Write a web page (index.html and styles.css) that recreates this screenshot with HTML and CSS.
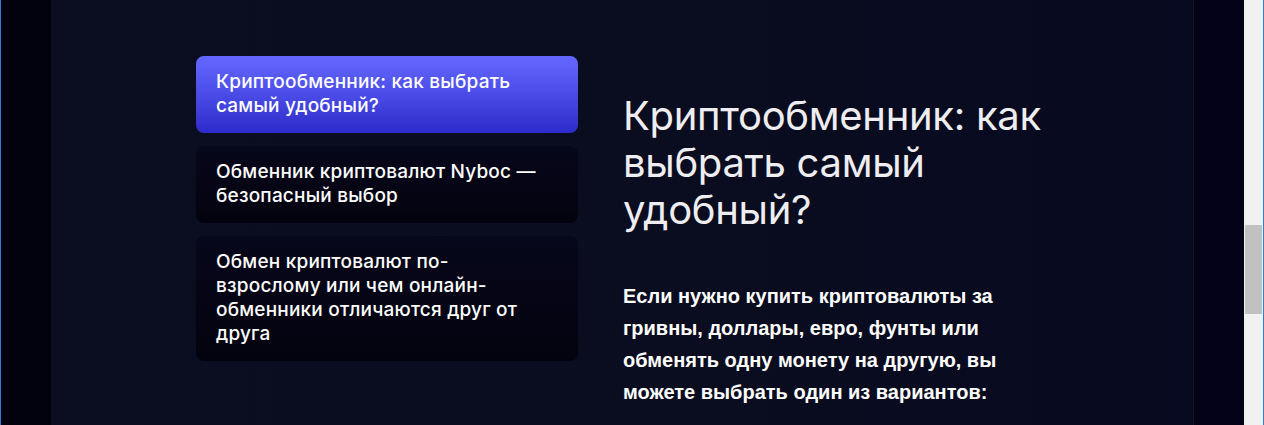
FILE: index.html
```html
<!DOCTYPE html>
<html lang="ru">
<head>
<meta charset="utf-8">
<title>Криптообменник</title>
<link rel="stylesheet" href="styles.css">
</head>
<body>
<div class="window">
  <div class="viewport">
    <div class="gutter"></div>
    <section class="panel">
      <nav class="toc">
        <a class="toc-item active">Криптообменник: как выбрать самый удобный?</a>
        <a class="toc-item">Обменник криптовалют Nyboc — безопасный выбор</a>
        <a class="toc-item">Обмен криптовалют по-взрослому или чем онлайн-обменники отличаются друг от друга</a>
      </nav>
      <article class="content">
        <h1 class="title">Криптообменник: как выбрать самый удобный?</h1>
        <p class="lead">Если нужно купить криптовалюты за гривны, доллары, евро, фунты или обменять одну монету на другую, вы можете выбрать один из вариантов:</p>
      </article>
    </section>
    <div class="gutter right"></div>
  </div>
  <div class="scrollbar"><div class="thumb"></div></div>
</div>
</body>
</html>
```

FILE: styles.css
```css
* { box-sizing: border-box; }
html, body { margin: 0; padding: 0; height: 425px; overflow: hidden; }
body { background: #02010f; font-family: Inter, "Noto Sans", sans-serif; }

.window {
  display: flex;
  height: 425px;
  border-left: 1px solid #2d7fd6;
  border-right: 1px solid #2d7fd6;
}
.viewport {
  flex: 1;
  display: flex;
  background: #02010f;
}
.gutter { width: 50px; flex: none; background: #02010e; }
.gutter.right { width: 50px; background: #030218; }

.panel {
  flex: 1;
  display: flex;
  gap: 45px;
  padding: 56px 0 0 145px;
  background: linear-gradient(90deg, #0b0d20 0%, #0a0c1f 60%, #070a20 100%);
  border-right: 1px solid #17181c;
}

.toc {
  width: 382px;
  flex: none;
  display: flex;
  flex-direction: column;
  gap: 13px;
}
.toc-item {
  display: block;
  padding: 14px 30px 15px 20px;
  border-radius: 8px;
  color: #ffffff;
  font-size: 19px;
  font-weight: 500;
  line-height: 24px;
  letter-spacing: 0.2px;
  background: linear-gradient(180deg, #07071b 0%, #03030f 100%);
}
.toc-item.active {
  background: linear-gradient(180deg, #6467ff 0%, #4b4ce8 50%, #2d2bc9 100%);
}

.content {
  width: 440px;
  flex: none;
  padding-top: 36px;
}
.title {
  margin: 0;
  color: #eeeef2;
  font-size: 40px;
  font-weight: 400;
  line-height: 47px;
  letter-spacing: -0.3px;
}
.lead {
  margin: 47px 0 0;
  color: #ffffff;
  font-family: "Liberation Sans", Arial, sans-serif;
  font-weight: 700;
  font-size: 20px;
  line-height: 32px;
  width: 420px;
}

.scrollbar {
  width: 19px;
  flex: none;
  background: #f1f1f1;
  padding-top: 225px;
  display: flex;
  justify-content: center;
}
.thumb {
  width: 17px;
  height: 89px;
  background: #c1c1c1;
}
```
